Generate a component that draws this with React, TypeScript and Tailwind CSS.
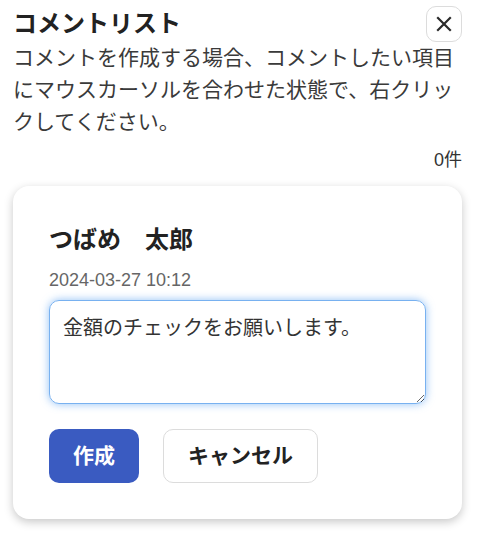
import { useState } from 'react';

const font = { fontFamily: '"Liberation Sans", "Noto Sans CJK JP", sans-serif' };

function CloseButton() {
  return (
    <button
      type="button"
      aria-label="閉じる"
      className="flex h-9 w-9 shrink-0 items-center justify-center rounded-[10px] border border-[#dcdcdc] bg-white"
    >
      <svg width="16" height="16" viewBox="0 0 16 16" fill="none">
        <path d="M2 2L14 14M14 2L2 14" stroke="#2b2b2b" strokeWidth="2.2" strokeLinecap="square" />
      </svg>
    </button>
  );
}

function CommentForm() {
  const [text, setText] = useState('金額のチェックをお願いします。');

  return (
    <div className="rounded-2xl bg-white px-9 pt-9 pb-9 shadow-[0_3px_10px_rgba(0,0,0,0.22)]">
      <h2 className="text-[24px] leading-9 font-bold text-[#222]">つばめ　太郎</h2>
      <p className="mt-[10px] text-[18px] leading-6 text-[#666]">2024-03-27 10:12</p>

      <textarea
        value={text}
        onChange={(e) => setText(e.target.value)}
        className="mt-2 block h-[104px] w-full rounded-[10px] border border-[#78b1f0] px-[13px] py-3 text-[20px] leading-[30px] text-[#333] shadow-[0_0_8px_rgba(70,150,240,0.6)] outline-none"
        style={font}
      />

      <div className="mt-[25px] flex gap-6">
        <button
          type="button"
          className="h-[54px] w-[90px] rounded-[10px] bg-[#3a5bc1] text-[21px] font-bold text-white"
          style={font}
        >
          作成
        </button>
        <button
          type="button"
          className="h-[54px] w-[155px] rounded-[10px] border border-[#dcdcdc] bg-white text-[21px] font-bold text-[#222]"
          style={font}
        >
          キャンセル
        </button>
      </div>
    </div>
  );
}

export default function App() {
  return (
    <div className="min-h-[545px] bg-white pl-[13px] pr-[24px]" style={font}>
      <div className="flex items-start justify-between pt-[6px]">
        <h1 className="text-[24px] leading-9 font-bold text-[#222]">コメントリスト</h1>
        <CloseButton />
      </div>

      <p className="text-[21px] leading-8 text-[#3a3a3a]">
        コメントを作成する場合、コメントしたい項目にマウスカーソルを合わせた状態で、右クリックしてください。
      </p>

      <p className="mt-[10px] text-right text-[18px] leading-6 text-[#333]">0件</p>

      <div className="mt-[14px]">
        <CommentForm />
      </div>
    </div>
  );
}
